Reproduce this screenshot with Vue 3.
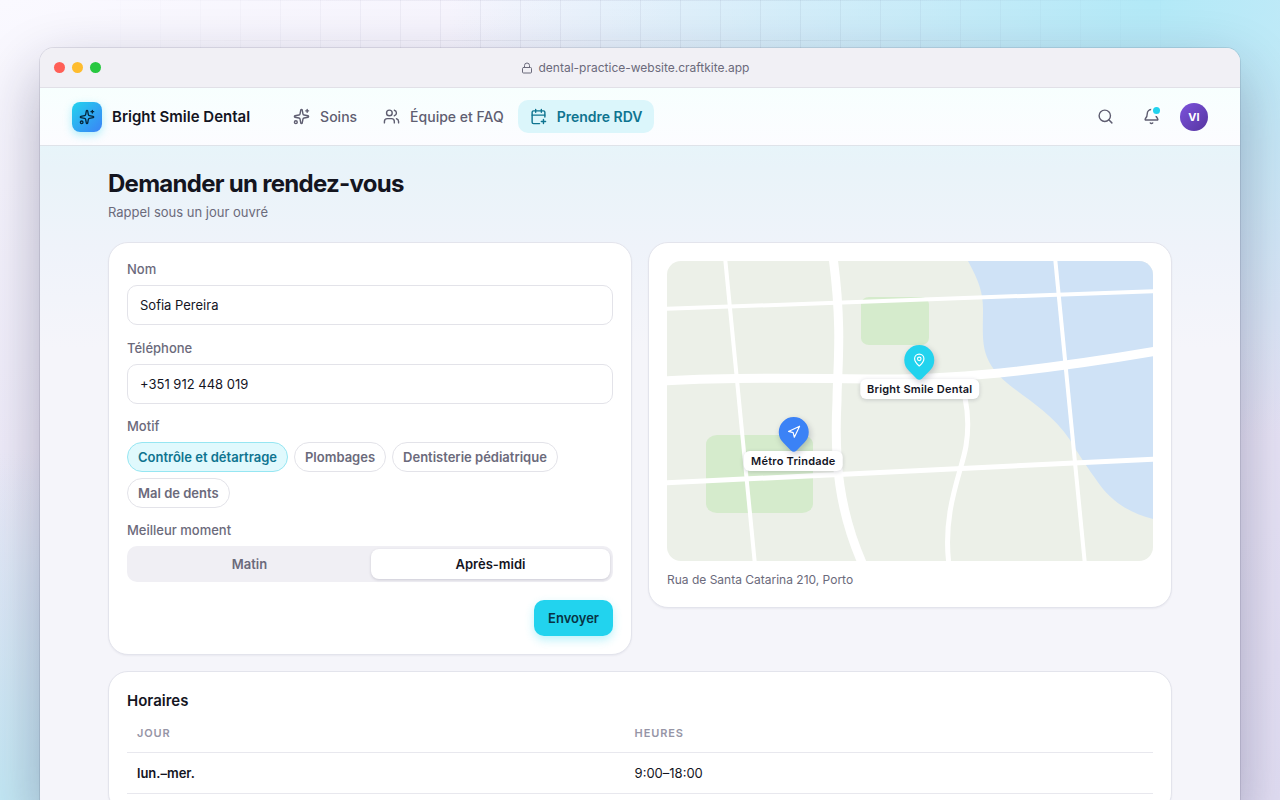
<script setup>
import { ref } from 'vue'

const nav = [
  { label: 'Soins', icon: 'sparkles', active: false },
  { label: 'Équipe et FAQ', icon: 'users', active: false },
  { label: 'Prendre RDV', icon: 'calendar', active: true },
]

const name = ref('Sofia Pereira')
const phone = ref('+351 912 448 019')

const reasons = ['Contrôle et détartrage', 'Plombages', 'Dentisterie pédiatrique', 'Mal de dents']
const reason = ref(reasons[0])

const moments = ['Matin', 'Après-midi']
const moment = ref(moments[1])

const hours = [{ day: 'lun.–mer.', time: '9:00–18:00' }]
</script>

<template>
  <div class="scene">
    <div class="grid-lines"></div>
    <div class="window">
      <div class="titlebar">
        <div class="lights"><i class="red"></i><i class="amber"></i><i class="green"></i></div>
        <div class="address">
          <svg class="icon" width="12" height="12" viewBox="0 0 24 24">
            <rect x="3" y="11" width="18" height="11" rx="2" />
            <path d="M7 11V7a5 5 0 0 1 10 0v4" />
          </svg>
          <span>dental-practice-website.craftkite.app</span>
        </div>
      </div>

      <div class="app">
        <header class="header">
          <div class="brand">
            <span class="logo">
              <svg class="icon" width="16" height="16" viewBox="0 0 24 24">
                <path d="M11.017 2.814a1 1 0 0 1 1.966 0l1.051 5.558a2 2 0 0 0 1.594 1.594l5.558 1.051a1 1 0 0 1 0 1.966l-5.558 1.051a2 2 0 0 0-1.594 1.594l-1.051 5.558a1 1 0 0 1-1.966 0l-1.051-5.558a2 2 0 0 0-1.594-1.594l-5.558-1.051a1 1 0 0 1 0-1.966l5.558-1.051a2 2 0 0 0 1.594-1.594z" />
                <path d="M20 2v4M22 4h-4" />
                <circle cx="4" cy="20" r="2" />
              </svg>
            </span>
            <span class="brand-name">Bright Smile Dental</span>
          </div>

          <nav class="nav">
            <a v-for="item in nav" :key="item.label" href="#" class="nav-link" :class="{ active: item.active }">
              <svg class="icon" width="17" height="17" viewBox="0 0 24 24">
                <template v-if="item.icon === 'sparkles'">
                  <path d="M11.017 2.814a1 1 0 0 1 1.966 0l1.051 5.558a2 2 0 0 0 1.594 1.594l5.558 1.051a1 1 0 0 1 0 1.966l-5.558 1.051a2 2 0 0 0-1.594 1.594l-1.051 5.558a1 1 0 0 1-1.966 0l-1.051-5.558a2 2 0 0 0-1.594-1.594l-5.558-1.051a1 1 0 0 1 0-1.966l5.558-1.051a2 2 0 0 0 1.594-1.594z" />
                  <path d="M20 2v4M22 4h-4" />
                  <circle cx="4" cy="20" r="2" />
                </template>
                <template v-else-if="item.icon === 'users'">
                  <path d="M16 21v-2a4 4 0 0 0-4-4H6a4 4 0 0 0-4 4v2" />
                  <path d="M16 3.128a4 4 0 0 1 0 7.744" />
                  <path d="M22 21v-2a4 4 0 0 0-3-3.87" />
                  <circle cx="9" cy="7" r="4" />
                </template>
                <template v-else>
                  <path d="M16 19h6M16 2v4M19 16v6M3 10h18M8 2v4" />
                  <path d="M21 12.598V6a2 2 0 0 0-2-2H5a2 2 0 0 0-2 2v14a2 2 0 0 0 2 2h8.5" />
                </template>
              </svg>
              <span>{{ item.label }}</span>
            </a>
          </nav>

          <div class="tools">
            <button class="tool" type="button" aria-label="Rechercher">
              <svg class="icon" width="17" height="17" viewBox="0 0 24 24">
                <circle cx="11" cy="11" r="8" />
                <path d="m21 21-4.34-4.34" />
              </svg>
            </button>
            <button class="tool" type="button" aria-label="Notifications">
              <svg class="icon" width="17" height="17" viewBox="0 0 24 24">
                <path d="M10.268 21a2 2 0 0 0 3.464 0" />
                <path d="M3.262 15.326A1 1 0 0 0 4 17h16a1 1 0 0 0 .74-1.673C19.41 13.956 18 12.499 18 8A6 6 0 0 0 6 8c0 4.499-1.411 5.956-2.738 7.326" />
              </svg>
              <span class="dot"></span>
            </button>
            <span class="avatar">VI</span>
          </div>
        </header>

        <main class="content">
          <h1>Demander un rendez-vous</h1>
          <p class="subtitle">Rappel sous un jour ouvré</p>

          <div class="columns">
            <form class="card form" @submit.prevent>
              <div class="fields">
                <div class="field">
                  <label class="label" for="name">Nom</label>
                  <input id="name" v-model="name" class="input" type="text" />
                </div>
                <div class="field">
                  <label class="label" for="phone">Téléphone</label>
                  <input id="phone" v-model="phone" class="input" type="tel" />
                </div>
              </div>
              <div class="field" role="group" aria-labelledby="reason-label">
                <span id="reason-label" class="label">Motif</span>
                <div class="chips">
                  <button
                    v-for="r in reasons"
                    :key="r"
                    type="button"
                    class="chip"
                    :class="{ selected: r === reason }"
                    :aria-pressed="r === reason"
                    @click="reason = r"
                  >{{ r }}</button>
                </div>
              </div>
              <div class="field" role="group" aria-labelledby="moment-label">
                <span id="moment-label" class="label">Meilleur moment</span>
                <div class="segmented">
                  <button
                    v-for="m in moments"
                    :key="m"
                    type="button"
                    class="segment"
                    :class="{ selected: m === moment }"
                    :aria-pressed="m === moment"
                    @click="moment = m"
                  >{{ m }}</button>
                </div>
              </div>
              <div class="actions">
                <button class="submit" type="submit">Envoyer</button>
              </div>
            </form>

            <section class="card">
              <div class="map">
                <svg class="map-art" viewBox="0 0 486 300" preserveAspectRatio="none">
                  <path class="water" d="M301 0C312 20 316 32 316 48C316 80 312 98 340 122C358 137 385 152 403 179C412 194 420 206 436 228C446 240 462 252 486 258V0Z" />
                  <rect class="park" x="194" y="36" width="68" height="48" rx="8" ry="7" />
                  <rect class="park" x="39" y="174" width="107" height="78" rx="11" ry="9" />
                  <g class="roads">
                    <path class="wide" d="M-4 120C80 115 150 118 218 118S380 109 490 90" />
                    <path class="wide" d="M166 -4C176 70 170 110 170 140C167 200 172 250 196 304" />
                    <path class="medium" d="M290 112C300 135 303 160 299 185S275 250 282 304" />
                    <path class="medium" d="M-4 222L490 198" />
                    <path class="narrow" d="M-4 48L490 30" />
                    <path class="narrow" d="M58 -4L88 304" />
                    <path class="narrow" d="M388 -4L418 304" />
                  </g>
                </svg>
                <div class="place clinic">
                  <span class="pin">
                    <svg class="icon" width="14" height="14" viewBox="0 0 24 24">
                      <path d="M20 10c0 4.993-5.539 10.193-7.399 11.799a1 1 0 0 1-1.202 0C9.539 20.193 4 14.993 4 10a8 8 0 0 1 16 0" />
                      <circle cx="12" cy="10" r="3" />
                    </svg>
                  </span>
                  <span class="place-name">Bright Smile Dental</span>
                </div>
                <div class="place metro">
                  <span class="pin">
                    <svg class="icon" width="14" height="14" viewBox="0 0 24 24">
                      <path d="M3 11 22 2 13 21 11 13Z" />
                    </svg>
                  </span>
                  <span class="place-name">Métro Trindade</span>
                </div>
              </div>
              <p class="caption">Rua de Santa Catarina 210, Porto</p>
            </section>
          </div>

          <section class="card">
            <h2>Horaires</h2>
            <table class="hours">
              <thead>
                <tr><th class="day-head" scope="col">Jour</th><th scope="col">Heures</th></tr>
              </thead>
              <tbody>
                <tr v-for="h in hours" :key="h.day">
                  <td class="day">{{ h.day }}</td>
                  <td>{{ h.time }}</td>
                </tr>
              </tbody>
            </table>
          </section>
        </main>
      </div>
    </div>
  </div>
</template>

<style>
body {
  margin: 0;
  overflow: hidden;
}
</style>

<style scoped>
* {
  box-sizing: border-box;
}

.scene {
  position: relative;
  display: flex;
  height: 100vh;
  padding: 48px 40px 0;
  overflow: hidden;
  background:
    radial-gradient(ellipse 55% 55% at 90% 0%, #b2e9f7 0%, rgba(178, 233, 247, 0) 100%),
    radial-gradient(ellipse 40% 44% at 0% 100%, #c4e9f5 0%, rgba(196, 233, 245, 0) 100%),
    linear-gradient(160deg, #faf9ff 0%, #ece8f8 50%, #e3dff4 100%);
  color: #14151f;
  font-family: Inter, "Liberation Sans", sans-serif;
  font-size: 13px;
  line-height: 18px;
}

.grid-lines {
  position: absolute;
  inset: 0;
  background-image:
    linear-gradient(to right, rgba(40, 40, 90, 0.06) 1px, transparent 1px),
    linear-gradient(to bottom, rgba(40, 40, 90, 0.06) 1px, transparent 1px);
  background-size: 40px 40px;
  mask-image: radial-gradient(ellipse 44% 60% at 50% 0%, #000 30%, transparent 100%);
}

.window {
  position: relative;
  display: flex;
  flex: 1;
  flex-direction: column;
  min-width: 0;
  margin-bottom: -12px;
  overflow: hidden;
  border-radius: 14px;
  background: #f5f5fa;
  box-shadow: 0 0 0 1px rgba(20, 20, 50, 0.1), 0 24px 60px rgba(25, 25, 65, 0.32);
}

.icon {
  flex: none;
  fill: none;
  stroke: currentColor;
  stroke-width: 2;
  stroke-linecap: round;
  stroke-linejoin: round;
}

.titlebar {
  display: grid;
  flex: none;
  grid-template-columns: 1fr auto 1fr;
  align-items: center;
  height: 40px;
  padding: 0 24px 0 14px;
  border-bottom: 1px solid #e1e0e7;
  background: #f1f0f5;
}

.lights {
  display: flex;
  gap: 7px;
}

.lights i {
  width: 11px;
  height: 11px;
  border-radius: 50%;
}

.red { background: #ff5f57; }
.amber { background: #febc2e; }
.green { background: #28c840; }

.address {
  display: flex;
  align-items: center;
  gap: 6px;
  color: #6b6a7b;
  font-size: 12px;
}

.app {
  flex: 1;
  background: linear-gradient(180deg, #e2f8fa 0, #e9f3f9 80px, #eff3fa 160px, #f5f5fa 260px);
}

.header {
  display: flex;
  align-items: center;
  height: 58px;
  padding: 0 32px;
  border-bottom: 1px solid #dfe3e9;
  background: linear-gradient(180deg, #f7fffe 0%, #fcfcff 100%);
}

.brand {
  display: flex;
  align-items: center;
  gap: 10px;
  margin-right: 31px;
}

.logo {
  display: grid;
  place-items: center;
  width: 30px;
  height: 30px;
  border-radius: 8px;
  background: linear-gradient(135deg, #22d3ee, #3b82f6);
  box-shadow: 0 3px 8px rgba(34, 211, 238, 0.35);
  color: #06283d;
}

.brand-name {
  font-size: 15px;
  font-weight: 600;
}

.nav {
  display: flex;
  gap: 2px;
}

.nav-link {
  display: flex;
  align-items: center;
  gap: 10px;
  height: 33px;
  padding: 0 12px;
  border-radius: 10px;
  color: #5f5e71;
  font-size: 14px;
  font-weight: 500;
  text-decoration: none;
}

.nav-link.active {
  background: #dbf6fb;
  color: #0e7490;
  font-weight: 600;
}

.tools {
  display: flex;
  align-items: center;
  gap: 12px;
  margin-left: auto;
}

.tool {
  position: relative;
  display: grid;
  place-items: center;
  width: 34px;
  height: 34px;
  padding: 0;
  border: 0;
  background: none;
  color: #5f5e71;
}

.dot {
  position: absolute;
  top: 7px;
  right: 8px;
  width: 7px;
  height: 7px;
  border-radius: 50%;
  background: #22d3ee;
  box-shadow: 0 0 0 2px #fafeff;
}

.avatar {
  display: grid;
  place-items: center;
  width: 28px;
  height: 28px;
  border-radius: 50%;
  background: linear-gradient(135deg, #7c53dc, #5635a0);
  color: #fff;
  font-size: 11px;
  font-weight: 700;
}

.content {
  max-width: 1128px;
  margin: 0 auto;
  padding: 22px 32px;
}

h1 {
  margin: 0;
  font-size: 24px;
  font-weight: 700;
  line-height: 32px;
  letter-spacing: -0.03em;
}

.subtitle {
  margin: 3px 0 21px;
  color: #6b6a7b;
}

.columns {
  display: grid;
  grid-template-columns: 1fr 1fr;
  align-items: start;
  gap: 16px;
  margin-bottom: 16px;
}

.card {
  min-width: 0;
  padding: 18px;
  border: 1px solid #e3e4ec;
  border-radius: 20px;
  background: #fff;
  box-shadow: 0 1px 2px rgba(20, 20, 50, 0.05);
}

.form {
  display: flex;
  flex-direction: column;
  gap: 14px;
}

.fields {
  display: grid;
  gap: 15px;
}

.field {
  display: flex;
  flex-direction: column;
  gap: 8px;
}

.label {
  color: #6b6a7b;
  font-weight: 500;
  line-height: 16px;
}

.input {
  width: 100%;
  height: 40px;
  padding: 0 12px;
  border: 1px solid #e3e3e9;
  border-radius: 10px;
  background: #fff;
  color: #14151f;
  font-family: inherit;
  font-size: 13px;
}

.chips {
  display: flex;
  flex-wrap: wrap;
  gap: 6px;
}

.chip {
  height: 30px;
  padding: 0 10px;
  border: 1px solid #e3e3e9;
  border-radius: 15px;
  background: #fff;
  color: #6b6a7b;
  font-family: inherit;
  font-size: 13px;
  font-weight: 600;
}

.chip.selected {
  border-color: #96e6f2;
  background: #e0f9fd;
  color: #0e7490;
}

.segmented {
  display: grid;
  grid-template-columns: 1fr 1fr;
  gap: 2px;
  height: 36px;
  padding: 3px;
  border-radius: 10px;
  background: #f0eff4;
}

.segment {
  padding: 0;
  border: 0;
  border-radius: 8px;
  background: none;
  color: #6b6a7b;
  font-family: inherit;
  font-size: 13px;
  font-weight: 600;
}

.segment.selected {
  background: #fff;
  box-shadow: 0 1px 3px rgba(20, 20, 50, 0.16);
  color: #14151f;
}

.actions {
  display: flex;
  justify-content: flex-end;
  padding-top: 4px;
}

.submit {
  height: 36px;
  padding: 0 14px;
  border: 0;
  border-radius: 10px;
  background: #22d3ee;
  box-shadow: 0 4px 10px rgba(34, 211, 238, 0.3);
  color: #083344;
  font-family: inherit;
  font-size: 13px;
  font-weight: 600;
}

.map {
  position: relative;
  height: 300px;
  overflow: hidden;
  border-radius: 14px;
  background: #ecf0e8;
}

.map-art {
  display: block;
  width: 100%;
  height: 100%;
}

.water { fill: #cfe2f6; }
.park { fill: #d5ebcc; }

.roads {
  fill: none;
  stroke: #fff;
}

.wide { stroke-width: 9; }
.medium { stroke-width: 5; }
.narrow { stroke-width: 4; }

.place {
  position: absolute;
  display: flex;
  flex-direction: column;
  align-items: center;
  gap: 4px;
  transform: translate(-50%, -100%);
}

.clinic {
  top: 46%;
  left: 52%;
}

.metro {
  top: 70%;
  left: 26%;
}

.pin {
  display: grid;
  place-items: center;
  width: 30px;
  height: 30px;
  border-radius: 50% 50% 4px 50%;
  box-shadow: 3px 1px 6px rgba(20, 20, 50, 0.22);
  color: #fff;
  transform: rotate(45deg);
}

.pin .icon {
  transform: rotate(-45deg);
}

.clinic .pin { background: #22d3ee; }
.metro .pin { background: #3b82f6; }

.place-name {
  padding: 0 7px;
  border-radius: 6px;
  background: #fff;
  box-shadow: 0 1px 4px rgba(20, 20, 50, 0.18);
  font-size: 11px;
  font-weight: 600;
  line-height: 20px;
  letter-spacing: 0.02em;
  white-space: nowrap;
}

.caption {
  margin: 10px 0 0;
  color: #6b6a7b;
  font-size: 12px;
}

h2 {
  margin: 0 0 2px;
  font-size: 15px;
  font-weight: 600;
  line-height: 22px;
}

.hours {
  width: 100%;
  border-collapse: collapse;
  table-layout: fixed;
}

.hours th,
.hours td {
  padding: 11px 10px;
  border-bottom: 1px solid #e8e8ee;
  text-align: left;
}

.hours th {
  padding: 10px;
  color: #9695a6;
  font-size: 11px;
  font-weight: 600;
  letter-spacing: 0.08em;
  text-transform: uppercase;
}

.hours .day-head {
  width: 48.5%;
}

.hours .day {
  font-weight: 600;
}
</style>
